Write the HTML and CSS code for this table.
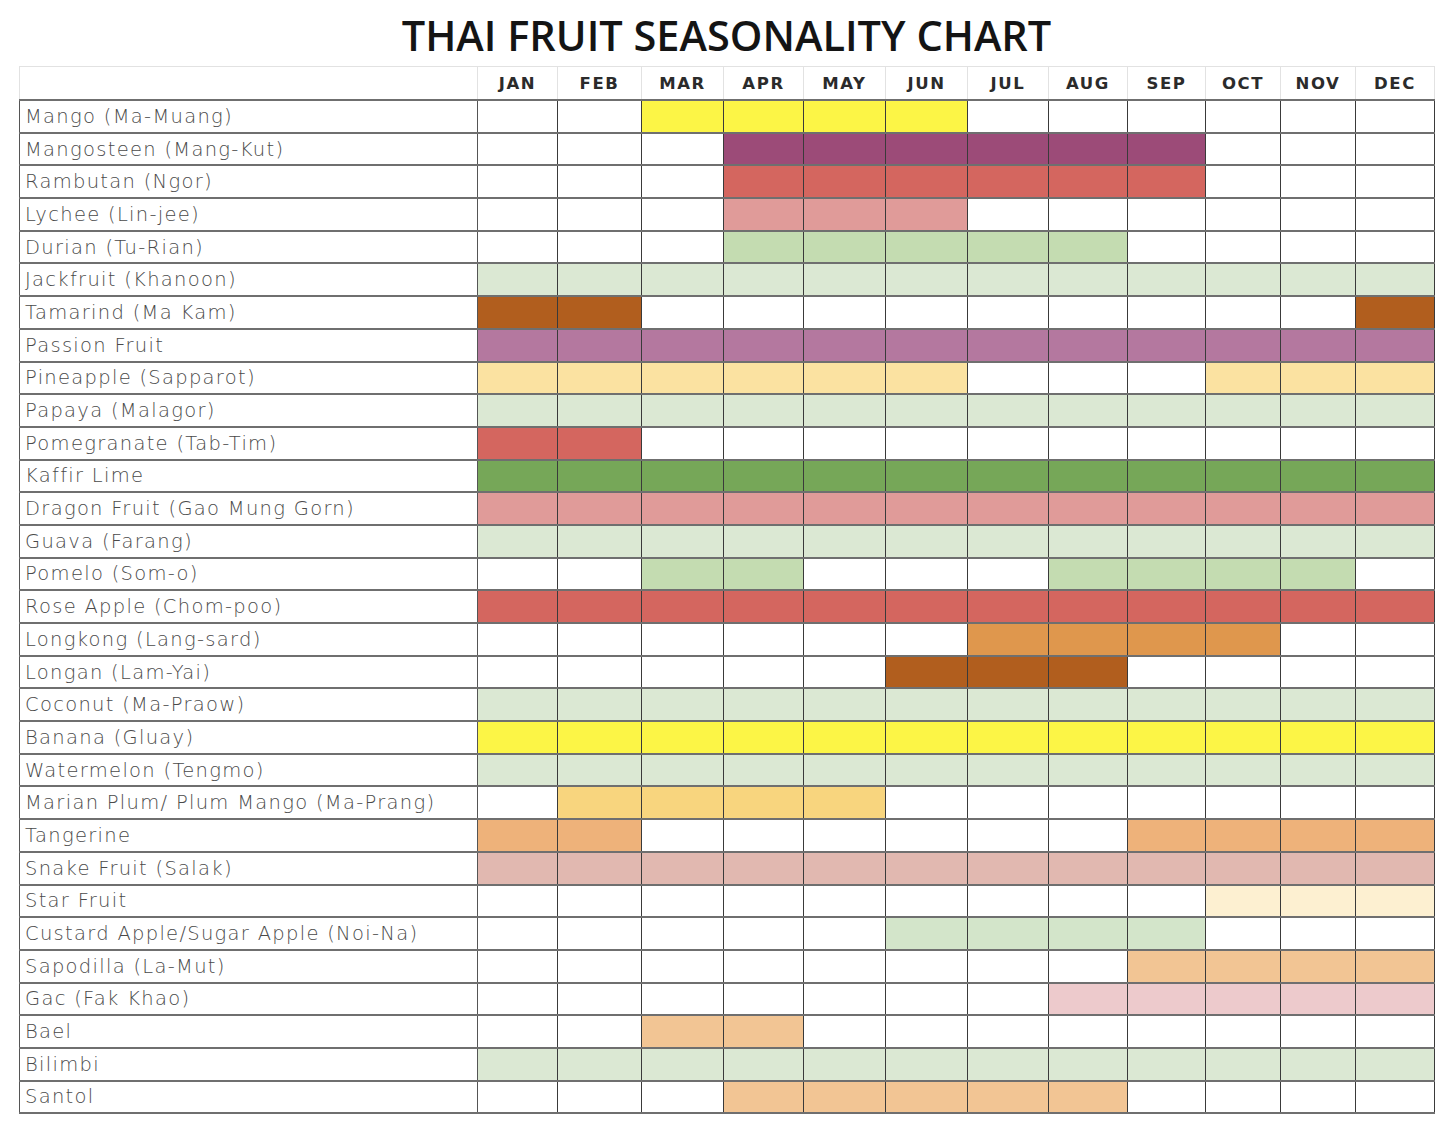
FILE: index.html
```html
<!DOCTYPE html>
<html lang="en">
<head>
<meta charset="utf-8">
<title>Thai Fruit Seasonality Chart</title>
<link rel="stylesheet" href="styles.css">
</head>
<body>
<h1 class="title">THAI FRUIT SEASONALITY CHART</h1>
<table class="chart">
<thead>
<tr><th class="corner"></th><th>JAN</th><th>FEB</th><th>MAR</th><th>APR</th><th>MAY</th><th>JUN</th><th>JUL</th><th>AUG</th><th>SEP</th><th>OCT</th><th>NOV</th><th>DEC</th></tr>
</thead>
<tbody>
<tr><th>Mango (Ma-Muang)</th><td></td><td></td><td class="yel"></td><td class="yel"></td><td class="yel"></td><td class="yel"></td><td></td><td></td><td></td><td></td><td></td><td></td></tr>
<tr><th>Mangosteen (Mang-Kut)</th><td></td><td></td><td></td><td class="plum"></td><td class="plum"></td><td class="plum"></td><td class="plum"></td><td class="plum"></td><td class="plum"></td><td></td><td></td><td></td></tr>
<tr><th>Rambutan (Ngor)</th><td></td><td></td><td></td><td class="red"></td><td class="red"></td><td class="red"></td><td class="red"></td><td class="red"></td><td class="red"></td><td></td><td></td><td></td></tr>
<tr><th>Lychee (Lin-jee)</th><td></td><td></td><td></td><td class="pink"></td><td class="pink"></td><td class="pink"></td><td></td><td></td><td></td><td></td><td></td><td></td></tr>
<tr><th>Durian (Tu-Rian)</th><td></td><td></td><td></td><td class="sage"></td><td class="sage"></td><td class="sage"></td><td class="sage"></td><td class="sage"></td><td></td><td></td><td></td><td></td></tr>
<tr><th>Jackfruit (Khanoon)</th><td class="mint"></td><td class="mint"></td><td class="mint"></td><td class="mint"></td><td class="mint"></td><td class="mint"></td><td class="mint"></td><td class="mint"></td><td class="mint"></td><td class="mint"></td><td class="mint"></td><td class="mint"></td></tr>
<tr><th>Tamarind (Ma Kam)</th><td class="brown"></td><td class="brown"></td><td></td><td></td><td></td><td></td><td></td><td></td><td></td><td></td><td></td><td class="brown"></td></tr>
<tr><th>Passion Fruit</th><td class="violet"></td><td class="violet"></td><td class="violet"></td><td class="violet"></td><td class="violet"></td><td class="violet"></td><td class="violet"></td><td class="violet"></td><td class="violet"></td><td class="violet"></td><td class="violet"></td><td class="violet"></td></tr>
<tr><th>Pineapple (Sapparot)</th><td class="cream"></td><td class="cream"></td><td class="cream"></td><td class="cream"></td><td class="cream"></td><td class="cream"></td><td></td><td></td><td></td><td class="cream"></td><td class="cream"></td><td class="cream"></td></tr>
<tr><th>Papaya (Malagor)</th><td class="mint"></td><td class="mint"></td><td class="mint"></td><td class="mint"></td><td class="mint"></td><td class="mint"></td><td class="mint"></td><td class="mint"></td><td class="mint"></td><td class="mint"></td><td class="mint"></td><td class="mint"></td></tr>
<tr><th>Pomegranate (Tab-Tim)</th><td class="red"></td><td class="red"></td><td></td><td></td><td></td><td></td><td></td><td></td><td></td><td></td><td></td><td></td></tr>
<tr><th>Kaffir Lime</th><td class="lime"></td><td class="lime"></td><td class="lime"></td><td class="lime"></td><td class="lime"></td><td class="lime"></td><td class="lime"></td><td class="lime"></td><td class="lime"></td><td class="lime"></td><td class="lime"></td><td class="lime"></td></tr>
<tr><th>Dragon Fruit (Gao Mung Gorn)</th><td class="pink"></td><td class="pink"></td><td class="pink"></td><td class="pink"></td><td class="pink"></td><td class="pink"></td><td class="pink"></td><td class="pink"></td><td class="pink"></td><td class="pink"></td><td class="pink"></td><td class="pink"></td></tr>
<tr><th>Guava (Farang)</th><td class="mint"></td><td class="mint"></td><td class="mint"></td><td class="mint"></td><td class="mint"></td><td class="mint"></td><td class="mint"></td><td class="mint"></td><td class="mint"></td><td class="mint"></td><td class="mint"></td><td class="mint"></td></tr>
<tr><th>Pomelo (Som-o)</th><td></td><td></td><td class="sage"></td><td class="sage"></td><td></td><td></td><td></td><td class="sage"></td><td class="sage"></td><td class="sage"></td><td class="sage"></td><td></td></tr>
<tr><th>Rose Apple (Chom-poo)</th><td class="red"></td><td class="red"></td><td class="red"></td><td class="red"></td><td class="red"></td><td class="red"></td><td class="red"></td><td class="red"></td><td class="red"></td><td class="red"></td><td class="red"></td><td class="red"></td></tr>
<tr><th>Longkong (Lang-sard)</th><td></td><td></td><td></td><td></td><td></td><td></td><td class="orange"></td><td class="orange"></td><td class="orange"></td><td class="orange"></td><td></td><td></td></tr>
<tr><th>Longan (Lam-Yai)</th><td></td><td></td><td></td><td></td><td></td><td class="brown"></td><td class="brown"></td><td class="brown"></td><td></td><td></td><td></td><td></td></tr>
<tr><th>Coconut (Ma-Praow)</th><td class="mint"></td><td class="mint"></td><td class="mint"></td><td class="mint"></td><td class="mint"></td><td class="mint"></td><td class="mint"></td><td class="mint"></td><td class="mint"></td><td class="mint"></td><td class="mint"></td><td class="mint"></td></tr>
<tr><th>Banana (Gluay)</th><td class="yel"></td><td class="yel"></td><td class="yel"></td><td class="yel"></td><td class="yel"></td><td class="yel"></td><td class="yel"></td><td class="yel"></td><td class="yel"></td><td class="yel"></td><td class="yel"></td><td class="yel"></td></tr>
<tr><th>Watermelon (Tengmo)</th><td class="mint"></td><td class="mint"></td><td class="mint"></td><td class="mint"></td><td class="mint"></td><td class="mint"></td><td class="mint"></td><td class="mint"></td><td class="mint"></td><td class="mint"></td><td class="mint"></td><td class="mint"></td></tr>
<tr><th>Marian Plum/ Plum Mango (Ma-Prang)</th><td></td><td class="gold"></td><td class="gold"></td><td class="gold"></td><td class="gold"></td><td></td><td></td><td></td><td></td><td></td><td></td><td></td></tr>
<tr><th>Tangerine</th><td class="tan"></td><td class="tan"></td><td></td><td></td><td></td><td></td><td></td><td></td><td class="tan"></td><td class="tan"></td><td class="tan"></td><td class="tan"></td></tr>
<tr><th>Snake Fruit (Salak)</th><td class="rose"></td><td class="rose"></td><td class="rose"></td><td class="rose"></td><td class="rose"></td><td class="rose"></td><td class="rose"></td><td class="rose"></td><td class="rose"></td><td class="rose"></td><td class="rose"></td><td class="rose"></td></tr>
<tr><th>Star Fruit</th><td></td><td></td><td></td><td></td><td></td><td></td><td></td><td></td><td></td><td class="ivory"></td><td class="ivory"></td><td class="ivory"></td></tr>
<tr><th>Custard Apple/Sugar Apple (Noi-Na)</th><td></td><td></td><td></td><td></td><td></td><td class="leaf"></td><td class="leaf"></td><td class="leaf"></td><td class="leaf"></td><td></td><td></td><td></td></tr>
<tr><th>Sapodilla (La-Mut)</th><td></td><td></td><td></td><td></td><td></td><td></td><td></td><td></td><td class="peach"></td><td class="peach"></td><td class="peach"></td><td class="peach"></td></tr>
<tr><th>Gac (Fak Khao)</th><td></td><td></td><td></td><td></td><td></td><td></td><td></td><td class="blush"></td><td class="blush"></td><td class="blush"></td><td class="blush"></td><td class="blush"></td></tr>
<tr><th>Bael</th><td></td><td></td><td class="peach"></td><td class="peach"></td><td></td><td></td><td></td><td></td><td></td><td></td><td></td><td></td></tr>
<tr><th>Bilimbi</th><td class="mint"></td><td class="mint"></td><td class="mint"></td><td class="mint"></td><td class="mint"></td><td class="mint"></td><td class="mint"></td><td class="mint"></td><td class="mint"></td><td class="mint"></td><td class="mint"></td><td class="mint"></td></tr>
<tr><th>Santol</th><td></td><td></td><td></td><td class="peach"></td><td class="peach"></td><td class="peach"></td><td class="peach"></td><td class="peach"></td><td></td><td></td><td></td><td></td></tr>
</tbody>
</table>
</body>
</html>
```

FILE: styles.css
```css
html, body {
  margin: 0;
  padding: 0;
  background: #ffffff;
}

body {
  padding: 0 16px 0 19px;
  font-family: "Open Sans", "Noto Sans", sans-serif;
  color: #222;
}

.title {
  margin: 0;
  height: 66px;
  line-height: 70px;
  text-align: center;
  font-family: "Open Sans", sans-serif;
  font-weight: 600;
  font-size: 41.5px;
  color: #141414;
}

.chart {
  border-collapse: collapse;
  table-layout: fixed;
  width: 1415px;
}

.chart thead th {
  height: 32px;
  padding: 0;
  border: 1px solid #e2e2e2;
  border-bottom: 2px solid #6f6f6f;
  font-family: "DejaVu Sans", sans-serif;
  font-weight: bold;
  font-size: 16.5px;
  letter-spacing: 1.6px;
  color: #2b2b2b;
  text-align: center;
  vertical-align: middle;
}

.chart thead th.corner { width: 457px; }
.chart thead th:nth-child(2) { width: 79px; }
.chart thead th:nth-child(3) { width: 83px; }
.chart thead th:nth-child(4) { width: 81px; }
.chart thead th:nth-child(5) { width: 79px; }
.chart thead th:nth-child(6) { width: 81px; }
.chart thead th:nth-child(7) { width: 81px; }
.chart thead th:nth-child(8) { width: 80px; }
.chart thead th:nth-child(9) { width: 78px; }
.chart thead th:nth-child(10) { width: 77px; }
.chart thead th:nth-child(11) { width: 74px; }
.chart thead th:nth-child(12) { width: 74px; }
.chart thead th:nth-child(13) { width: 78px; }

.chart tbody tr { height: 32.7px; }

.chart tbody th {
  padding: 0 0 0 5px;
  border: 1px solid #555;
  border-top: 2px solid #6f6f6f;
  border-bottom: 2px solid #6f6f6f;
  font-family: "DejaVu Sans", sans-serif;
  font-weight: 200;
  font-size: 19.5px;
  letter-spacing: 1.3px;
  color: #4a4a4a;
  text-align: left;
  vertical-align: middle;
  white-space: nowrap;
}

.chart tbody td {
  padding: 0;
  border-left: 1px solid #3a3a3a;
  border-right: 1px solid #3a3a3a;
  border-top: 2px solid #6f6f6f;
  border-bottom: 2px solid #6f6f6f;
  background: #ffffff;
}

.chart tbody td.yel { background: #fcf546; }
.chart tbody td.plum { background: #9c4b78; }
.chart tbody td.red { background: #d4665f; }
.chart tbody td.pink { background: #e09b99; }
.chart tbody td.sage { background: #c4dcb1; }
.chart tbody td.mint { background: #dbe8d3; }
.chart tbody td.brown { background: #b15e1e; }
.chart tbody td.violet { background: #b4789f; }
.chart tbody td.cream { background: #fbe2a1; }
.chart tbody td.lime { background: #76a758; }
.chart tbody td.orange { background: #df974d; }
.chart tbody td.gold { background: #f8d57e; }
.chart tbody td.tan { background: #eeb27a; }
.chart tbody td.rose { background: #e1b8b0; }
.chart tbody td.ivory { background: #fdf0d1; }
.chart tbody td.leaf { background: #d3e5ca; }
.chart tbody td.peach { background: #f2c594; }
.chart tbody td.blush { background: #edcacc; }
```
